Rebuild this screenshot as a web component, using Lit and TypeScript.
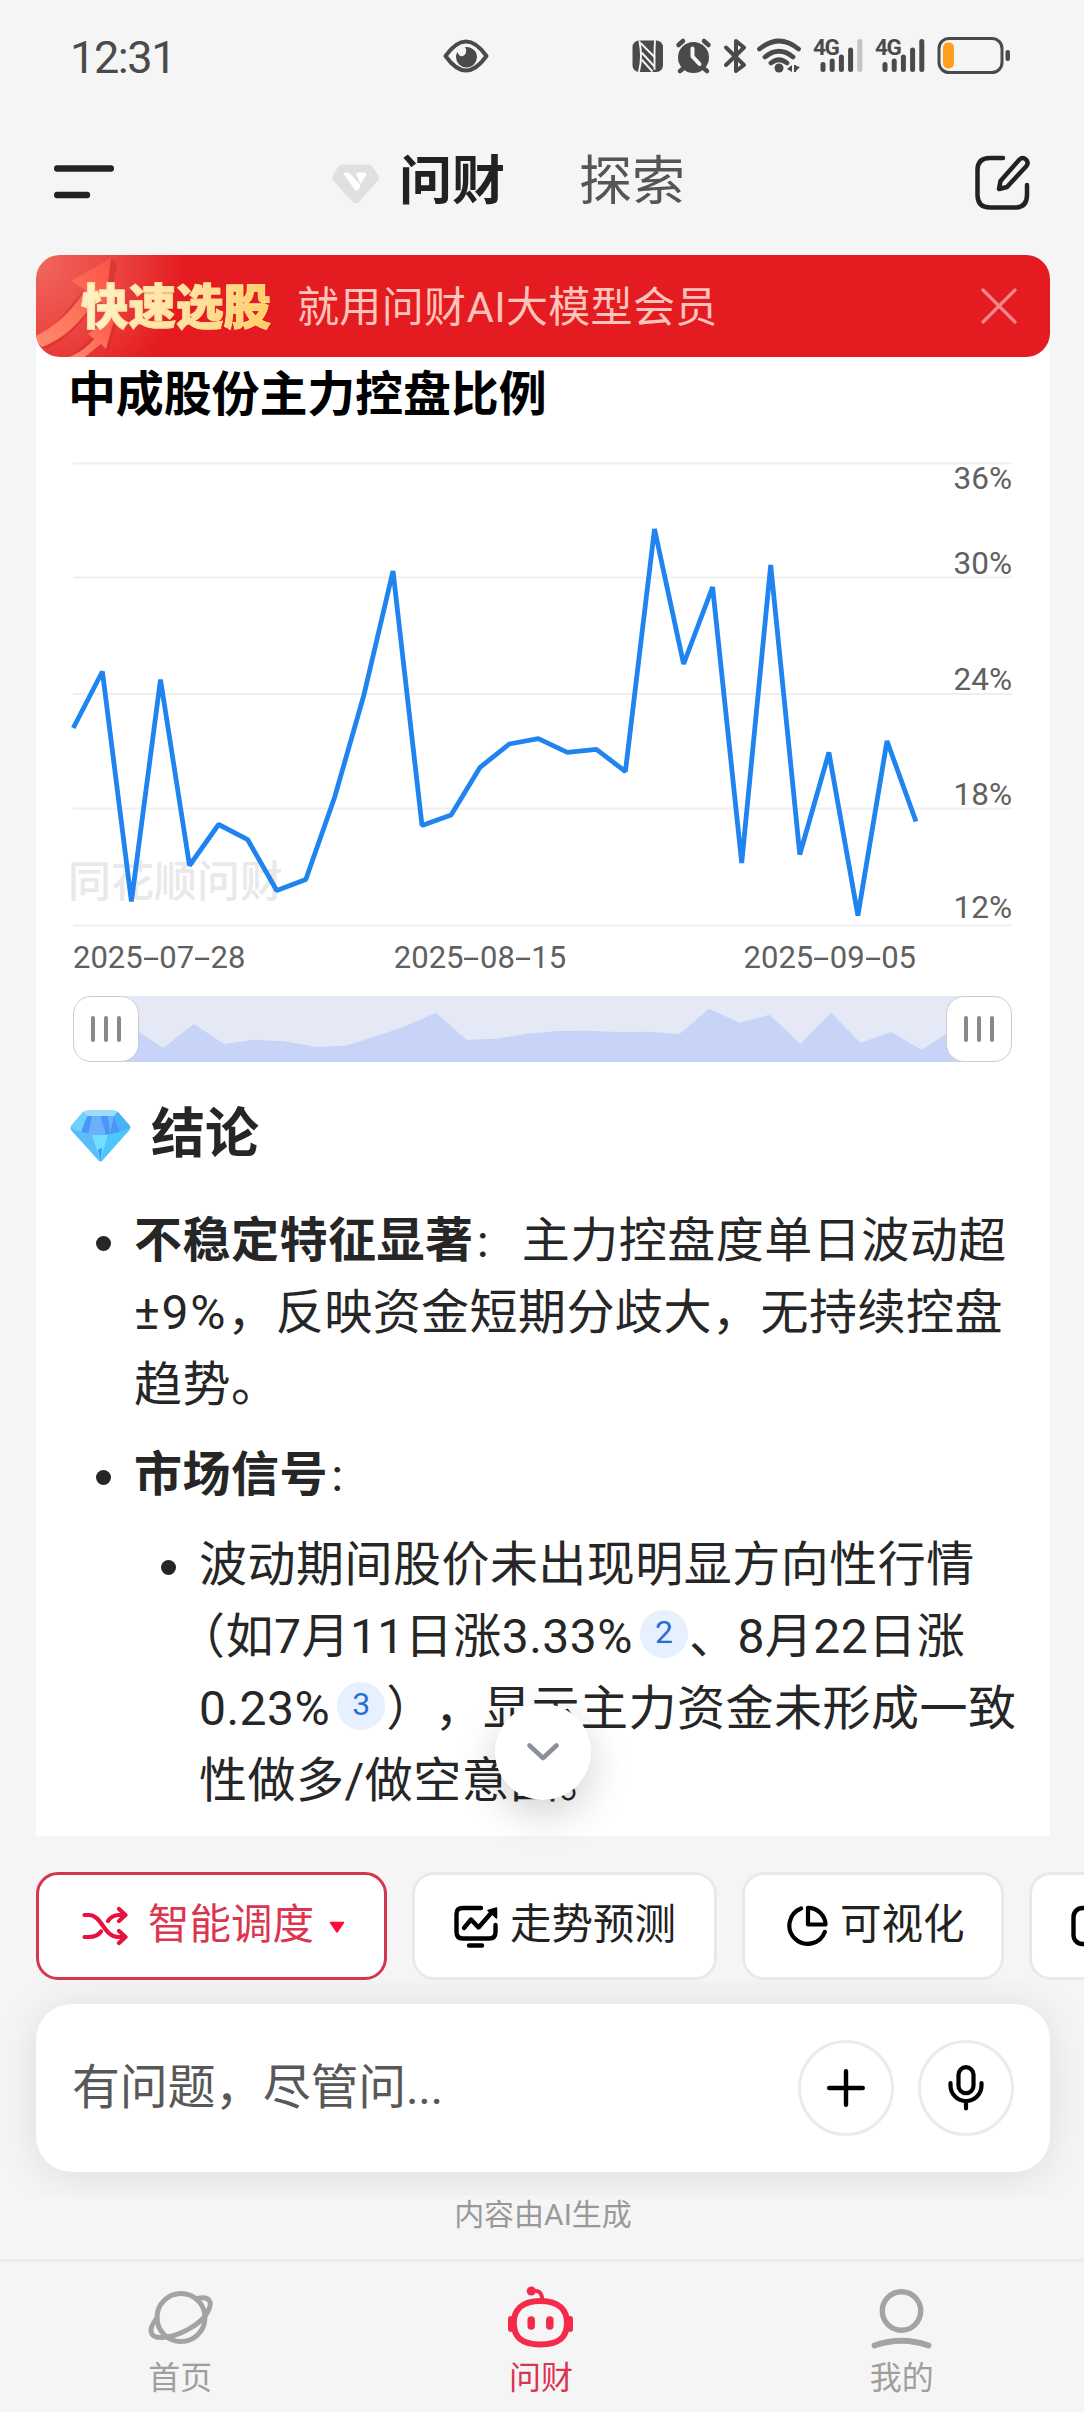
import { LitElement, html, svg, css } from "lit";
import { customElement } from "lit/decorators.js";

const CHART_TOP = 440;
const STEP = 29.06;
const SERIES = [
  728, 671.5, 901.5, 679.5, 865.5, 824.5, 839.7, 890.5, 879.5, 796.7, 695, 571,
  825.5, 815, 767.3, 744, 738.7, 752.3, 749.3, 771.5, 529, 664, 587, 863, 565,
  854.5, 752.5, 915.5, 741, 821.5,
];
const GRID = [463.5, 577.5, 694, 808.5, 925.5];
const Y_LABELS: [string, number][] = [
  ["36%", 489], ["30%", 574], ["24%", 689.5], ["18%", 804.5], ["12%", 917.5],
];
const OVERVIEW: [number, number][] = [
  [60, 32], [90, 52], [121, 28], [151, 48], [181, 43.7], [211, 45.3], [243, 50.7],
  [272.5, 49.7], [303, 40.3], [331, 30.7], [363, 16.7], [393.5, 43.7], [424, 42.7],
  [454.5, 37.7], [485, 35], [515, 34.7], [545.5, 36], [576, 35.7], [606.5, 38],
  [636, 12.7], [666.5, 26.7], [696.5, 18.7], [727.5, 48], [758, 16.7],
  [787.5, 46.7], [818, 36], [848.5, 53.7], [874, 37.5], [882, 30],
];

const linePoints = SERIES.map((y, i) => `${(0.3 + i * STEP).toFixed(1)},${y - CHART_TOP}`).join(" ");
const areaPoints = "20,66 30,6 " + OVERVIEW.map((p) => p.join(",")).join(" ") + " 919,66";

@customElement("status-bar")
export class StatusBar extends LitElement {
  static styles = css`
    :host { display: flex; height: 112px; position: relative; box-sizing: border-box; padding: 0 72px 0 70px;
      font-family: Roboto, sans-serif; color: #4a4a4a; align-items: center; }
    .time { font-size: 45px; line-height: 52px; letter-spacing: -1.4px; width: 373px; padding-top: 4px; }
    .eye { display: block; }
    .icons { display: block; margin-left: 143px; flex: none; }
    .net { font: 700 22.500px Roboto, sans-serif; letter-spacing: -1.500px; }
  `;
  bars(x: number, last: string) {
    return svg`<g stroke-width="5" stroke-linecap="round" stroke="#4a4a4a">
      <path d="M${x} 44.5V49.5M${x + 9.2} 41V49.5M${x + 18.4} 37V49.5M${x + 27.6} 30V49.5"/>
      <path d="M${x + 36.8} 21.5V49.5" stroke=${last}/></g>`;
  }
  render() {
    return html`
      <div class="time">12:31</div>
      <svg class="eye" width="46" height="34" viewBox="0 0 46 34">
        <path d="M2.500 17C10 6.500 16 2.500 23 2.500S36 6.500 43.500 17C36 27.500 30 31.500 23 31.500S10 27.500 2.500 17Z" fill="none" stroke="#4a4a4a" stroke-width="4" stroke-linejoin="round"/>
        <path d="M22 8C29 7.500 34 12 34 18A10.500 10.500 0 0 1 13 18C13 16 13.500 14.500 14.500 13C15.500 16.500 18 18 20 17C23.500 15.500 24 11 22 8Z" fill="#4a4a4a"/>
      </svg>
      <svg class="icons" width="380" height="72" viewBox="0 0 380 72">
        <rect x="0.500" y="20.500" width="30.500" height="31.500" rx="6.500" fill="#4a4a4a"/>
        <g fill="none" stroke="#f5f5f5" stroke-width="1.900" stroke-linecap="round" stroke-linejoin="round">
          <path d="M7.500 21.500Q9 29 9 36Q9 44 7 51.500M23 21Q22.500 27 22.500 34V49"/>
          <path d="M9 23.500L22.500 37M10 33L22 46M10 40L20 51"/>
        </g>
        <g fill="#4a4a4a">
          <circle cx="61.500" cy="37.500" r="15.500"/>
          <circle cx="147" cy="48" r="4.500"/>
          <path d="M155 49L160 45V52ZM162 45H164V52H162ZM164 46L168 47L164 51Z"/>
        </g>
        <path d="M60.500 28.500V36.500L67.500 44" fill="none" stroke="#f5f5f5" stroke-width="4" stroke-linecap="round" stroke-linejoin="round"/>
        <g fill="none" stroke="#4a4a4a" stroke-width="4.500" stroke-linecap="round" stroke-linejoin="round">
          <path d="M46.500 25L51 21M76.500 25L72 21M50.500 49L48 51M72.500 49L75 51"/>
          <path d="M94 27.500L112 45L104 51V21L112 27.500L94 45" stroke-width="4"/>
          <path d="M127.500 29Q147 13 166.500 29M133 37Q147 25.500 161 37M139 43Q147 36.500 155 43" stroke-width="4.800"/>
        </g>
        <g fill="#4a4a4a"><text class="net" x="181" y="35">4G</text><text class="net" x="243" y="35">4G</text></g>
        ${this.bars(191, "#c4c4c4")}${this.bars(253, "#4a4a4a")}
        <rect x="307" y="18.500" width="63" height="34" rx="10" fill="none" stroke="#4a4a4a" stroke-width="3"/>
        <rect x="311" y="22.500" width="11" height="26" rx="5" fill="#ff9f1c"/>
        <rect x="373.500" y="30" width="4.500" height="11" rx="2.200" fill="#4a4a4a"/>
      </svg>`;
  }
}

@customElement("top-bar")
export class TopBar extends LitElement {
  static styles = css`
    :host { display: flex; height: 143px; box-sizing: border-box; padding: 0 54px 3px; align-items: center; }
    svg { display: block; flex: none; }
    .menu { margin-right: 218px; }
    .gem { margin: 3px 19px 0 0; }
    .tab { font-size: 53px; line-height: 64px; color: #555; }
    .tab.on { font-weight: 700; color: #222; margin-right: 74px; }
    .edit { margin-left: auto; }
  `;
  render() {
    return html`
      <svg class="menu" width="60" height="36" viewBox="0 0 60 36">
        <path d="M3.200 4.500H56.800M3.200 31H33" stroke="#222" stroke-width="6.400" stroke-linecap="round"/>
      </svg>
      <svg class="gem" width="48" height="40" viewBox="0 0 48 40">
        <path d="M9.500 0.500H37Q39.500 0.500 41 3L46.500 12Q47.500 14 46 16.500L27 38Q23.500 41 20.500 38L1 16.500Q-0.500 14 0.500 12L6 3Q7.500 0.500 9.500 0.500Z" fill="#e0e0e0"/>
        <path d="M13 8.500H16Q17.500 8.500 18.500 10L28 20.500Q29 22 28 23.500L25.500 26.500Q24 27.500 23 26L12 10.500Q11.500 8.500 13 8.500ZM26 8.500H32.500Q35 9 34 11.500L29.500 19Q28.500 20 27.500 18.500L24.500 11Q24 9 26 8.500Z" fill="#fff"/>
      </svg>
      <div class="tab on">问财</div>
      <div class="tab">探索</div>
      <svg class="edit" width="55" height="56" viewBox="0 0 55 56" fill="none" stroke="#222" stroke-width="4.500" stroke-linecap="round" stroke-linejoin="round">
        <path d="M28 4H15Q2.500 4 2.500 16V41Q2.500 53.500 15 53.500H40Q52 53.500 52 41V31"/>
        <path d="M24 35L25.500 27L44.500 5.500Q47.500 2.500 51 5.500Q54 8.500 51.500 12L32 33Z"/>
      </svg>`;
  }
}

@customElement("promo-banner")
export class PromoBanner extends LitElement {
  static styles = css`
    :host { display: flex; position: relative; height: 102px; margin: 0 34px 0 36px; box-sizing: border-box;
      padding: 0 33px 0 45px; align-items: center; border-radius: 24px; overflow: hidden;
      background: radial-gradient(ellipse 150px 140px at 0 10px, #f0675e 0%, #ea4340 55%, #e41b20 100%); }
    .art { position: absolute; left: 0; top: 0; }
    .hot { position: relative; font-size: 47.500px; font-weight: 900; line-height: 60px; width: 216px; padding-top: 3px; -webkit-text-stroke: .8px #ffe09a;
      background: linear-gradient(100deg, #fff0c4 10%, #ffe09a 55%, #ffc850 95%); -webkit-background-clip: text; background-clip: text; color: transparent; }
    .msg { font-size: 42px; line-height: 56px; color: #ffc3ba; letter-spacing: .35px; padding-top: 3px; }
    .x { margin-left: auto; display: block; }
  `;
  render() {
    return html`
      <svg class="art" width="120" height="102" viewBox="0 0 120 102">
        <defs><linearGradient id="a" x1="0" y1="1" x2="1" y2="0"><stop offset="0" stop-color="#ff8b6e"/><stop offset="1" stop-color="#fb5445"/></linearGradient></defs>
        <path d="M75 3L81 9L73 54L64 42Q40 80 10 94L0 92Z" fill="#c92a20" opacity=".45"/>
        <path d="M0 81Q30 66 49 35L35 26L75 3L69 50L60 43Q38 80 6 92L0 86Z" fill="url(#a)"/>
        <path d="M77 64L81 68L72 96L66 90Q54 99 44 104H32Z" fill="#c92a20" opacity=".45"/>
        <path d="M28 104Q48 97 58 84L52 79L80 58L70 94L65 89Q54 98 46 104Z" fill="url(#a)"/>
      </svg>
      <div class="hot">快速选股</div>
      <div class="msg">就用问财AI大模型会员</div>
      <svg class="x" width="36" height="36" viewBox="0 0 36 36"><path d="M2 2L34 34M34 2L2 34" stroke="#f4868a" stroke-width="3.200" stroke-linecap="round"/></svg>`;
  }
}

@customElement("ratio-chart")
export class RatioChart extends LitElement {
  static styles = css`
    :host { display: block; margin-left: 37px; width: 939px; }
    svg { display: block; overflow: visible; }
    .lbl { font-family: Roboto, sans-serif; font-size: 31.500px; fill: #606060; }
    .mark { font-size: 43px; font-weight: 500; fill: #e9e9e9; }
    .dates { display: flex; position: relative; height: 40px; margin-top: 6px; width: 843px; justify-content: space-between;
      font: 31px/40px Roboto, sans-serif; color: #606060; }
    .mid { margin-left: -29px; }
    .dash { display: inline-block; width: 16.500px; text-align: center; transform: scaleX(1.900); }
    .slider { display: flex; justify-content: space-between; height: 66px; margin-top: 18px; position: relative; }
    .area { position: absolute; left: 0; top: 0; }
    .grip { position: relative; display: flex; gap: 9px; align-items: center; justify-content: center; box-sizing: border-box;
      width: 66px; height: 66px; border: 1.500px solid #ccc; border-radius: 18px; background: #fff; }
    .bar { width: 4px; height: 26px; border-radius: 2px; background: #888; }
  `;
  date(d: string, cls = "") {
    const [y, m, day] = d.split("-");
    return html`<div class=${cls}>${y}<span class="dash">-</span>${m}<span class="dash">-</span>${day}</div>`;
  }
  render() {
    const grip = html`<div class="grip"><i class="bar"></i><i class="bar"></i><i class="bar"></i></div>`;
    return html`
      <svg width="939" height="492" viewBox="0 0 939 492">
        ${GRID.map((y) => svg`<path d="M0 ${y - CHART_TOP}H939" stroke="#efefef" stroke-width="2"/>`)}
        <text class="mark" x="-5" y="457">同花顺问财</text>
        <polyline points=${linePoints} fill="none" stroke="#1f84f0" stroke-width="4.800" stroke-linejoin="bevel"/>
        ${Y_LABELS.map(([t, y]) => svg`<text class="lbl" x="939" y=${y - CHART_TOP} text-anchor="end">${t}</text>`)}
      </svg>
      <div class="dates">${this.date("2025-07-28")}${this.date("2025-08-15", "mid")}${this.date("2025-09-05")}</div>
      <div class="slider">
        <svg class="area" width="939" height="66" viewBox="0 0 939 66">
          <rect x="20" width="899" height="66" fill="#e5e9f6"/>
          <polygon points=${areaPoints} fill="#c8d4f7"/>
        </svg>
        ${grip}${grip}
      </div>`;
  }
}

@customElement("answer-text")
export class AnswerText extends LitElement {
  static styles = css`
    :host { display: block; padding-left: 34px; color: #262626; }
    .head { display: flex; align-items: center; height: 72px; gap: 20px; font-size: 54px; font-weight: 700; line-height: 72px; }
    .head svg { display: block; margin-top: 1px; }
    .list { list-style: none; margin: 0; padding: 0; font-size: 48px; line-height: 72px; letter-spacing: .48px; white-space: nowrap; text-spacing-trim: space-all; }
    .outer { margin-top: 34px; padding-left: 64px; }
    .inner { margin-top: 18px; padding-left: 65px; }
    .item { position: relative; }
    .item + .item { margin-top: 18px; }
    .item::before { content: ""; position: absolute; left: -38px; top: 31px; width: 15px; height: 15px; border-radius: 50%; background: #262626; }
    .open { margin-left: -22px; }
    .colon { font-size: 37px; line-height: 0; margin-right: 11px; }
    .num { letter-spacing: 1.800px; }
    .ref { display: inline-flex; width: 48px; height: 48px; margin: 0 1px 0 7px; border-radius: 50%; background: #e6f0fe; color: #2b6cd4;
      font: 32px/44px Roboto, sans-serif; justify-content: center; vertical-align: 10px; letter-spacing: 0; margin-top: -12px; }
  `;
  render() {
    return html`
      <div class="head">
        <svg width="61" height="52" viewBox="0 0 61 52">
          <path d="M13 2Q15 .5 18 .5H43Q46 .5 48 2L60 16Q61 18 59.500 20L32 51Q30.500 52.500 29 51L1 20Q0 18 1 16Z" fill="#55c3fb"/>
          <path d="M13 2Q15 .5 18 .5H43Q46 .5 48 2L44 6H17Z" fill="#9bdcf6"/>
          <path d="M17 6H44L50 22L30.500 26L11 22Z" fill="#4a95f7"/>
          <path d="M22 6L30.500 6L36 25H18ZM38 6L44 6L40 24Z" fill="#6ab0fb"/>
          <path d="M1 16L13 2L17 6L11 22L1 18Z" fill="#6fd0fa"/><path d="M60 16L48 2L44 6L50 22L60 18Z" fill="#4ab0f8"/>
          <path d="M11 22L22 25L29.500 50L2 21Z" fill="#5bbdf8"/><path d="M22 25H38L30.500 51Z" fill="#74dcff"/>
          <path d="M38 25L50 22L59 20L31 50Z" fill="#4cc6fb"/><path d="M28 40L30.500 51L32 38Z" fill="#3a96ee"/>
        </svg>结论
      </div>
      <ul class="list outer">
        <li class="item"><b>不稳定特征显著</b><span class="colon">：</span>主力控盘度单日波动超<br><span class="num">±9%</span>，反映资金短期分歧大，无持续控盘<br>趋势。</li>
        <li class="item"><b>市场信号</b><span class="colon">：</span>
          <ul class="list inner">
            <li class="item">波动期间股价未出现明显方向性行情<br><span class="open">（</span>如7月11日涨3.33%<span class="ref">2</span>、8月22日涨<br>0.23%<span class="ref">3</span>），显示主力资金未形成一致<br>性做多/做空意图。</li>
          </ul>
        </li>
      </ul>`;
  }
}

@customElement("skill-chips")
export class SkillChips extends LitElement {
  static styles = css`
    :host { display: flex; gap: 25px; height: 108px; padding: 36px 0 0 36px; overflow: hidden; }
    .chip { display: flex; align-items: center; box-sizing: border-box; height: 108px; flex: none; border: 3px solid #e9e9e9; border-radius: 22px;
      background: #fff; font-size: 41.500px; line-height: 60px; color: #222; padding-left: 39px; width: 305px; }
    .chip svg { display: block; flex: none; }
    .txt { margin: -2px 0 0 12px; }
    .hot { width: 351px; border-color: #d2374f; color: #dc3550; padding-left: 43px; }
    .hot .txt { margin-left: 20px; }
    .hot .tri { margin-left: 15px; margin-top: 2px; }
    .pie { width: 262px; padding-left: 41px; }
    .pie .txt { margin-left: 12px; }
  `;
  render() {
    return html`
      <div class="chip hot">
        <svg width="46" height="40" viewBox="0 0 46 40" fill="none" stroke="#e8123f" stroke-width="4.200" stroke-linecap="round" stroke-linejoin="round">
          <path d="M2.500 9H7C20 9 22 31 36 31H42M2.500 31H7Q15 31 19 25.500M26 15Q30 9 37 9H42M37 3L43.500 9L37 15M37 25L43.500 31L37 37"/>
        </svg>
        <span class="txt">智能调度</span>
        <svg class="tri" width="16" height="13" viewBox="0 0 16 13"><path d="M1.500 1.500H14.500L8 11Z" fill="#ff0a3c" stroke="#ff0a3c" stroke-width="1.500" stroke-linejoin="round"/></svg>
      </div>
      <div class="chip">
        <svg width="44" height="44" viewBox="0 0 44 44" fill="none" stroke="#000" stroke-width="4.400" stroke-linecap="round" stroke-linejoin="round">
          <path d="M27 4H9Q2.500 4 2.500 10V28Q2.500 34.500 9 34.500H35Q41.500 34.500 41.500 28V21M15 41.500H28M10 24L17 15.500L24.500 23.500L38 8"/>
          <path d="M42.500 4V14L34 6.500Z" fill="#000" stroke-width="1.500"/>
        </svg>
        <span class="txt">走势预测</span>
      </div>
      <div class="chip pie">
        <svg width="42" height="42" viewBox="0 0 42 42" fill="none" stroke="#000" stroke-width="4.200" stroke-linecap="round" stroke-linejoin="round">
          <path d="M15 3.500A18.300 18.300 0 1 0 38.800 27"/><path d="M22 2.800V19.500H39.500A17.500 17 0 0 0 22 2.800Z"/>
        </svg>
        <span class="txt">可视化</span>
      </div>
      <div class="chip">
        <svg width="44" height="44" viewBox="0 0 44 44" fill="none" stroke="#000" stroke-width="4.400"><rect x="2.500" y="4" width="39" height="36" rx="9"/></svg>
      </div>`;
  }
}

@customElement("ask-box")
export class AskBox extends LitElement {
  static styles = css`
    :host { display: block; height: 216px; overflow: hidden; padding: 24px 34px 0 36px; box-sizing: border-box; }
    .box { display: flex; align-items: center; gap: 24px; height: 168px; box-sizing: border-box; padding: 0 36px 0 36px; border-radius: 36px;
      background: #fff; box-shadow: 0 4px 44px rgba(0, 0, 0, .1); }
    .hint { flex: 1; font-size: 48px; line-height: 72px; color: #585858; margin-top: -1px; letter-spacing: -.3px; }
    .btn { width: 96px; height: 96px; box-sizing: border-box; border: 3px solid #ebebeb; border-radius: 50%; display: grid; place-items: center; }
  `;
  render() {
    return html`<div class="box">
      <div class="hint">有问题，尽管问...</div>
      <div class="btn"><svg width="38" height="38" viewBox="0 0 38 38"><path d="M19 2.200V35.800M2.200 19H35.800" stroke="#000" stroke-width="4.400" stroke-linecap="round"/></svg></div>
      <div class="btn"><svg width="36" height="46" viewBox="0 0 36 46" fill="none" stroke="#000" stroke-width="4.200" stroke-linecap="round">
        <rect x="10.500" y="2.200" width="15" height="26" rx="7.500"/><path d="M2.500 18V20.500A15.500 15.500 0 0 0 33.500 20.500V18M18 37V43.500"/></svg></div>
    </div>`;
  }
}

@customElement("tab-bar")
export class TabBar extends LitElement {
  static styles = css`
    :host { display: grid; grid-template-columns: repeat(3, 1fr); height: 153px; box-sizing: border-box; border-top: 3px solid #ebebeb;
      padding: 17px 2px 0 0; color: #9f9f9f; }
    .tab { display: flex; flex-direction: column; align-items: center; font-size: 32px; line-height: 40px; }
    .tab svg { display: block; margin-bottom: 7px; }
    .on { color: #dc3350; }
  `;
  render() {
    return html`
      <div class="tab">
        <svg width="73" height="72" viewBox="0 -1 73 72" fill="none" stroke="#a3a3a3" stroke-width="5" stroke-linecap="round">
          <circle cx="37" cy="37.500" r="24"/>
          <path d="M53 18.500C65 15.500 70 21 63 33C57 44 35 57 18 57.500C6 58 3 50 13 38"/>
        </svg>首页
      </div>
      <div class="tab on">
        <svg width="73" height="72" viewBox="0 -1 73 72" fill="none" stroke="#f52a4a" stroke-width="6">
          <path d="M36.400 21C56 21 63 31 63 43C63 58 54 64.500 36.400 64.500C18.800 64.500 9.800 58 9.800 43C9.800 31 17 21 36.400 21Z"/>
          <path d="M7 39V49M66 39V49" stroke-linecap="round"/>
          <path d="M27.200 40V46M45.800 40V46" stroke-width="7.500" stroke-linecap="round"/>
          <path d="M28 11Q38 9 38.300 20" stroke-width="4"/><circle cx="27.300" cy="11" r="4.600" fill="#f52a4a" stroke="none"/>
        </svg>问财
      </div>
      <div class="tab">
        <svg width="73" height="72" viewBox="0 -1 73 72" fill="none" stroke="#a3a3a3" stroke-width="5.400">
          <circle cx="36.500" cy="31" r="19.200"/><path d="M9.500 65.500Q36.500 56 63.500 65.500" stroke-linecap="round" stroke-width="5.800"/>
        </svg>我的
      </div>`;
  }
}

@customElement("app-root")
export class AppRoot extends LitElement {
  static styles = css`
    :host { display: block; width: 1084px; height: 2412px; overflow: hidden; background: #f5f5f5; position: relative;
      font-family: Roboto, "Noto Sans CJK SC", sans-serif; }
    .card { background: #fff; margin: -24px 34px 0 36px; height: 1503px; box-sizing: border-box; padding-top: 32px; position: relative; z-index: 0; }
    .lift { position: relative; z-index: 1; display: block; }
    .title { margin: 0 0 15px 32px; height: 60px; font-size: 48px; line-height: 60px; font-weight: 700; color: #000; letter-spacing: -.15px; }
    .answer { margin-top: 37px; }
    .down { position: absolute; left: 459px; bottom: 36px; width: 96px; height: 96px; border-radius: 50%; background: #fff; display: grid; place-items: center;
      box-shadow: 0 14px 40px rgba(0, 0, 0, .18); }
    .note { height: 63px; box-sizing: border-box; padding: 1.500px 0 0 2px; text-align: center; font-size: 30px; line-height: 34px; color: #999; }
  `;
  render() {
    return html`
      <status-bar></status-bar>
      <top-bar></top-bar>
      <div class="lift"><promo-banner></promo-banner></div>
      <main class="card">
        <div class="title">中成股份主力控盘比例</div>
        <ratio-chart></ratio-chart>
        <answer-text class="answer"></answer-text>
        <div class="down"><svg width="32" height="18" viewBox="0 0 32 18"><path d="M2.500 2.500L16 15L29.500 2.500" fill="none" stroke="#8b8f98" stroke-width="4.500" stroke-linecap="round" stroke-linejoin="round"/></svg></div>
      </main>
      <skill-chips></skill-chips>
      <ask-box></ask-box>
      <div class="note">内容由AI生成</div>
      <tab-bar></tab-bar>`;
  }
}
